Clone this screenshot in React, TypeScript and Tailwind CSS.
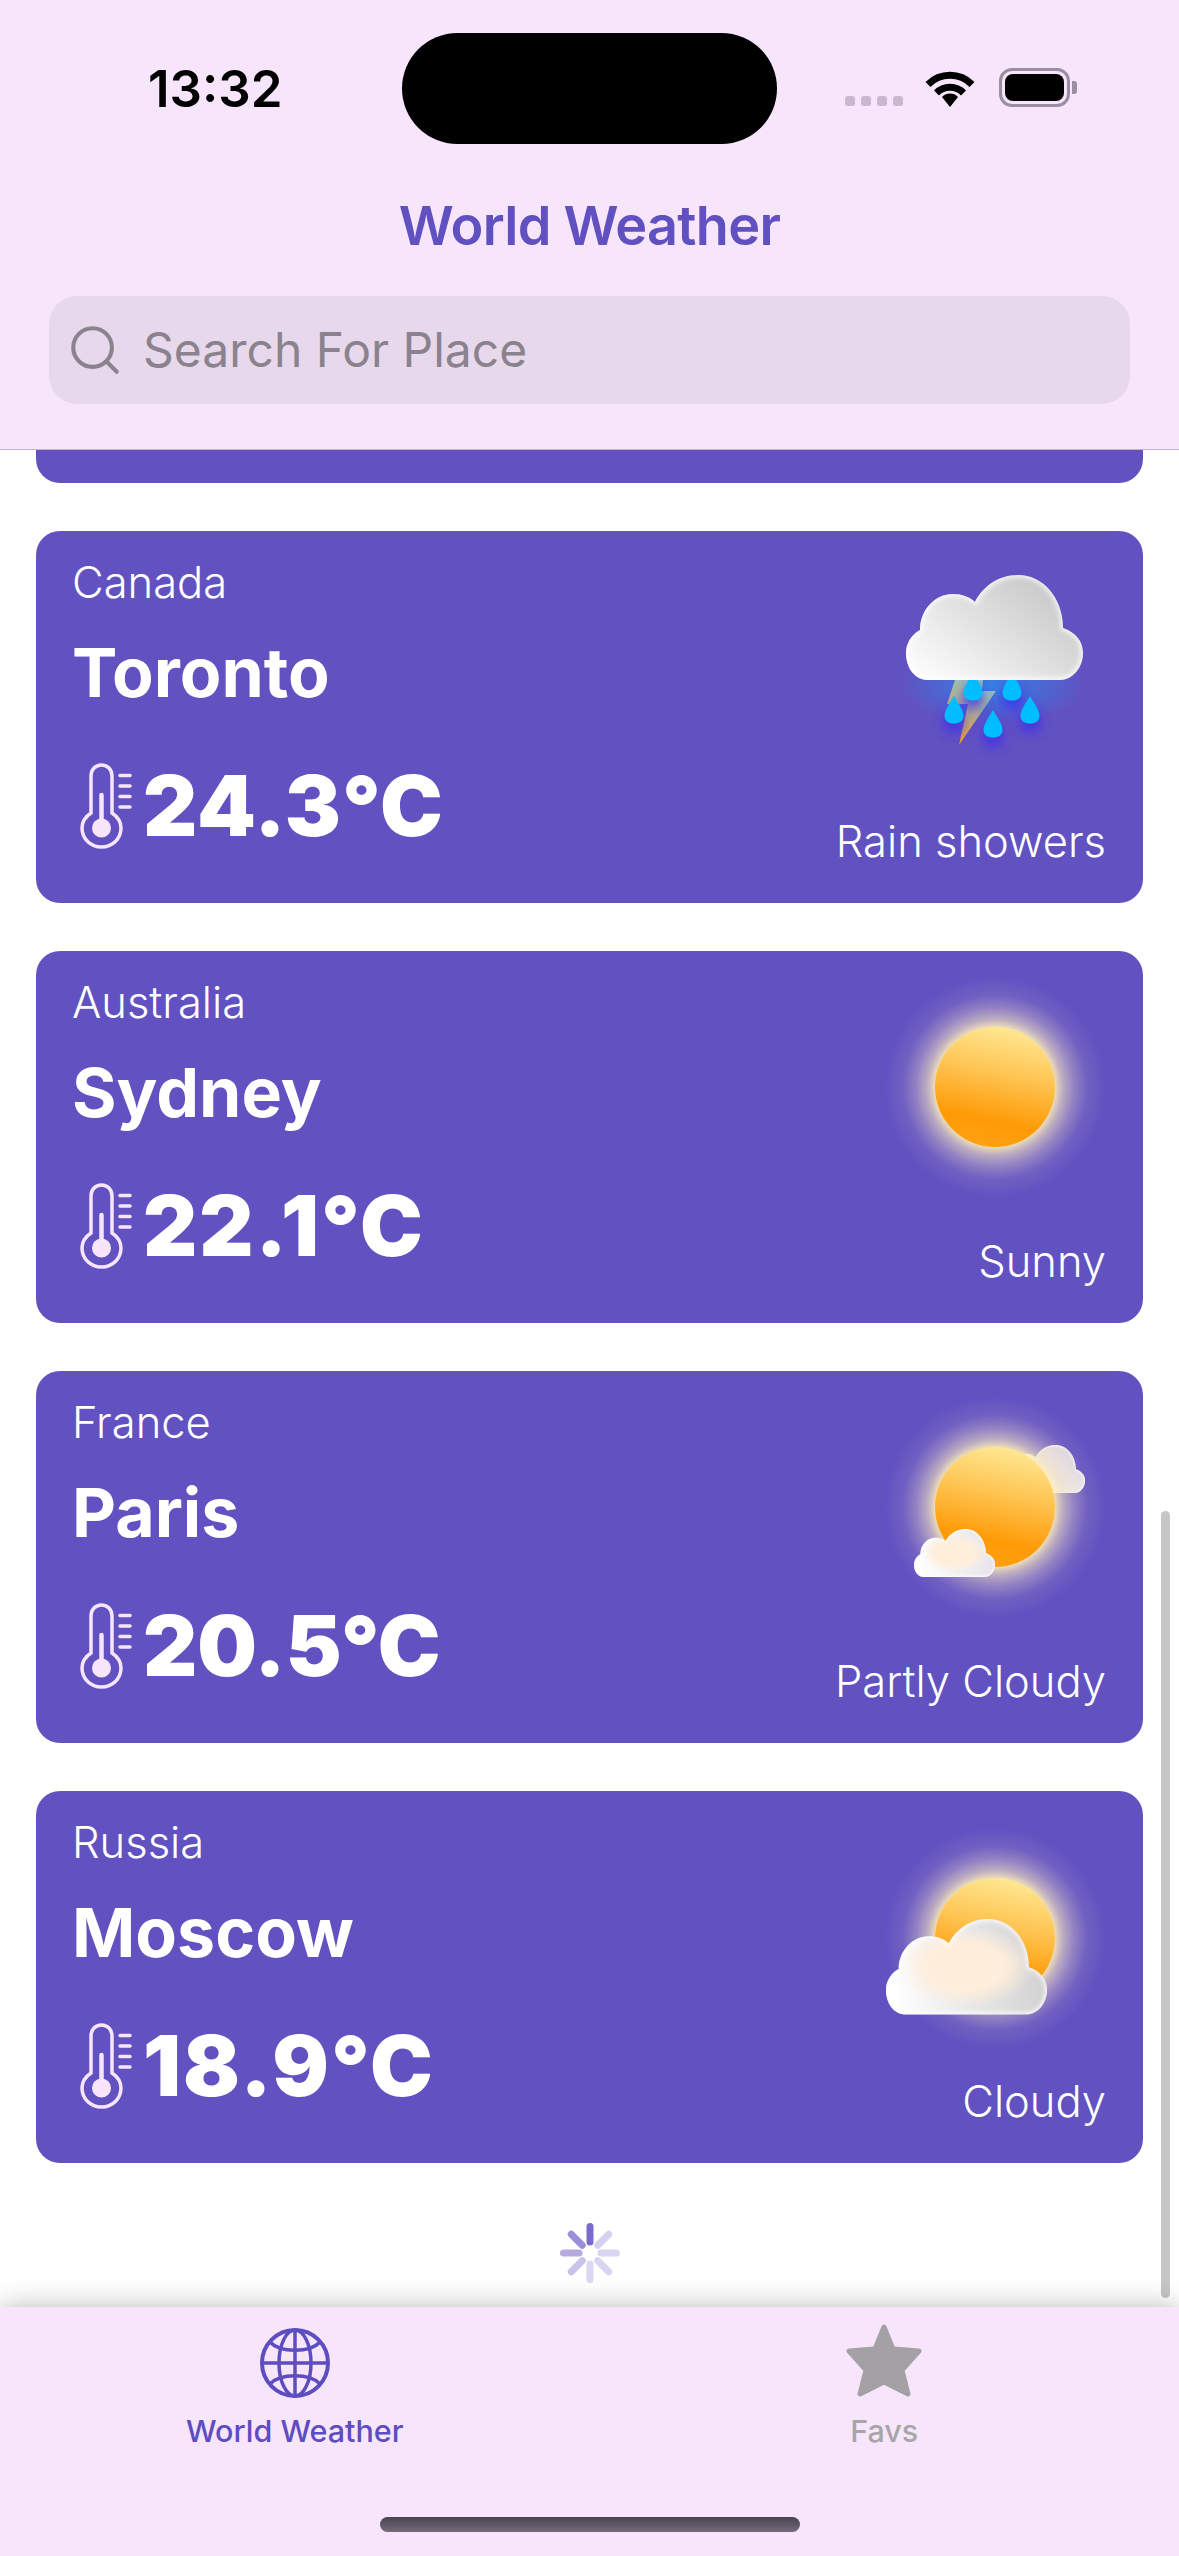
import { useId } from "react";
import { Search } from "lucide-react";

const CLOUD =
  "M53 132C40 132 31 120 31 105C31 95 37 86 45 82C45 62 60 46 78 46C87 46 95 49 100 54C108 38 124 27 143 27C168 27 188 50 188 80C200 84 208 93 208 105C208 120 197 132 185 132Z";

function Cloud({ x, y, scale, tint, to = "#d6d6d8", flat }: { x: number; y: number; scale: number; tint?: string; to?: string; flat?: boolean }) {
  const id = useId();
  return (
    <g transform={`translate(${x} ${y}) scale(${scale}) translate(-31 -27)`}>
      <defs>
        <linearGradient id={`${id}f`} x1="0.05" y1="1" x2="1" y2={flat ? "0.95" : "0.25"}>
          <stop offset="0" stopColor="#ffffff" />
          <stop offset="1" stopColor={to} />
        </linearGradient>
        <radialGradient id={`${id}t`} cx="0.5" cy="0.5" r="0.42">
          <stop offset="0" stopColor={tint} />
          <stop offset="0.55" stopColor={tint} />
          <stop offset="1" stopColor={tint} stopOpacity="0" />
        </radialGradient>
        <clipPath id={`${id}c`}>
          <path d={CLOUD} />
        </clipPath>
        <filter id={`${id}b`} x="-10%" y="-10%" width="120%" height="120%">
          <feGaussianBlur stdDeviation="2.500" />
        </filter>
      </defs>
      <path d={CLOUD} fill={`url(#${id}f)`} />
      {tint && <path d={CLOUD} fill={`url(#${id}t)`} />}
      <g clipPath={`url(#${id}c)`}>
        <path d={CLOUD} fill="none" stroke="#ffffff" strokeWidth="4" filter={`url(#${id}b)`} />
      </g>
    </g>
  );
}

function Sun({ cy = 119 }: { cy?: number }) {
  const id = useId();
  return (
    <>
      <defs>
        <radialGradient id={`${id}g`}>
          <stop offset="0.54" stopColor="#fff0b8" stopOpacity="0.9" />
          <stop offset="0.62" stopColor="#f3e2c0" stopOpacity="0.62" />
          <stop offset="0.72" stopColor="#f0dfc8" stopOpacity="0.34" />
          <stop offset="0.84" stopColor="#f0dfc8" stopOpacity="0.1" />
          <stop offset="1" stopColor="#f0dfc8" stopOpacity="0" />
        </radialGradient>
        <linearGradient id={`${id}s`} x1="0.62" y1="0" x2="0.42" y2="1">
          <stop offset="0" stopColor="#ffe894" />
          <stop offset="0.38" stopColor="#ffc553" />
          <stop offset="0.78" stopColor="#ff9a06" />
          <stop offset="1" stopColor="#ffa111" />
        </linearGradient>
      </defs>
      <circle cx="120" cy={cy} r="110" fill={`url(#${id}g)`} />
      <circle cx="120" cy={cy} r="60" fill={`url(#${id}s)`} />
    </>
  );
}

const DROP = "M0 -14C3 -8 9.500 -1 9.500 6C9.500 11 5.500 13.500 0 13.500C-5.500 13.500 -9.500 11 -9.500 6C-9.500 -1 -3 -8 0 -14Z";

function RainIcon() {
  const id = useId();
  const drops = [
    [98, 139],
    [137, 139],
    [79, 162],
    [155, 162],
    [118, 176],
  ];
  return (
    <svg viewBox="0 0 240 240" className="w-[240px] h-[240px]">
      <defs>
        <radialGradient id={`${id}g`} cx="0.5" cy="0.5" r="0.5">
          <stop offset="0" stopColor="#2f8ce8" stopOpacity="0.85" />
          <stop offset="0.55" stopColor="#3a78e0" stopOpacity="0.55" />
          <stop offset="1" stopColor="#3a78e0" stopOpacity="0" />
        </radialGradient>
        <linearGradient id={`${id}l`} x1="0.7" y1="0" x2="0.3" y2="1">
          <stop offset="0" stopColor="#8fc8c0" />
          <stop offset="0.5" stopColor="#b9b488" />
          <stop offset="1" stopColor="#f5a125" />
        </linearGradient>
        <filter id={`${id}b`} x="-100%" y="-100%" width="300%" height="300%">
          <feGaussianBlur stdDeviation="7" />
        </filter>
      </defs>
      <ellipse cx="118" cy="138" rx="92" ry="38" fill={`url(#${id}g)`} />
      <polygon points="80,132 108,132 107,143 121,143 84,197 93,156 72,156" fill={`url(#${id}l)`} />
      {drops.map(([x, y], i) => (
        <path key={i} d={DROP} transform={`translate(${x} ${y + 8})`} fill="#3a2cf0" filter={`url(#${id}b)`} />
      ))}
      {drops.map(([x, y], i) => (
        <path key={i} d={DROP} transform={`translate(${x} ${y})`} fill="#00bdff" />
      ))}
      <Cloud x={31} y={27} scale={1} to="#c6c6c6" />
    </svg>
  );
}

function SunIcon() {
  return (
    <svg viewBox="0 0 240 240" className="w-[240px] h-[240px]">
      <Sun />
    </svg>
  );
}

function PartlyIcon() {
  return (
    <svg viewBox="0 0 240 240" className="w-[240px] h-[240px]">
      <Cloud x={129} y={57} scale={0.458} to="#d8d4e0" />
      <Sun />
      <Cloud x={39} y={141} scale={0.458} to="#e6e4ea" tint="#ffeeda" flat />
    </svg>
  );
}

function CloudyIcon() {
  return (
    <svg viewBox="0 0 240 240" className="w-[240px] h-[240px]">
      <Sun cy={130} />
      <Cloud x={11} y={111} scale={0.91} to="#d2d2d2" tint="#ffeedb" flat />
    </svg>
  );
}

function Thermometer() {
  return (
    <svg viewBox="0 0 54 86" className="w-[54px] h-[86px] shrink-0" fill="none" stroke="#f7e5fc">
      <path d="M11 50V13C11 6.500 15.500 2 21.500 2C27.500 2 32 6.500 32 13V50C38 54 41 59.500 41 65C41 75.500 32.500 84 21.500 84C10.500 84 2 75.500 2 65C2 59.500 5 54 11 50Z" strokeWidth="3.500" />
      <path d="M21.500 32V60" strokeWidth="4.500" strokeLinecap="round" />
      <circle cx="21.500" cy="65" r="9.500" fill="#f7e5fc" stroke="none" />
      <path d="M40 12.500H50M40 23H50M40 33.500H50M40 44H50" strokeWidth="3.500" strokeLinecap="round" />
    </svg>
  );
}

const PLACES = [
  { country: "Canada", city: "Toronto", temp: "24.3°C", spacing: "tracking-[1px]", desc: "Rain showers", Icon: RainIcon },
  { country: "Australia", city: "Sydney", temp: "22.1°C", spacing: "tracking-[2px]", desc: "Sunny", Icon: SunIcon },
  { country: "France", city: "Paris", temp: "20.5°C", spacing: "tracking-[0px]", desc: "Partly Cloudy", Icon: PartlyIcon },
  { country: "Russia", city: "Moscow", temp: "18.9°C", spacing: "tracking-[2px]", desc: "Cloudy", Icon: CloudyIcon },
];

function WeatherCard({ country, city, temp, spacing, desc, Icon }: (typeof PLACES)[number]) {
  return (
    <div className="h-[372px] shrink-0 rounded-[24px] bg-[#6252c1] text-white flex justify-between pl-[36px] pr-[37px]">
      <div className="flex flex-col">
        <div className="mt-[29px] text-[43.500px] leading-[44px] font-light">{country}</div>
        <div className="mt-[33px] text-[68px] leading-[70px] font-bold">{city}</div>
        <div className="mt-[56px] ml-[8px] flex items-center gap-[9px]">
          <Thermometer />
          <span className={`text-[84px] leading-[86px] font-black ${spacing}`}>{temp}</span>
        </div>
      </div>
      <div className="flex flex-col items-end">
        <div className="mt-[17px] -mr-[9px]">
          <Icon />
        </div>
        <div className="mt-auto mb-[40px] text-[43.500px] leading-[44px] font-light">{desc}</div>
      </div>
    </div>
  );
}

function Spinner() {
  const spokes = ["#7a6ccc", "#d6d1f1", "#d8d4f2", "#d8d4f2", "#dcd8f3", "#c9c2ec", "#b5aadf", "#9a8fd8"];
  return (
    <svg viewBox="-30 -30 60 60" className="w-[60px] h-[60px]">
      {spokes.map((c, i) => (
        <line key={i} x1="0" y1="-26.500" x2="0" y2="-11" stroke={c} strokeWidth="7" strokeLinecap="round" transform={`rotate(${i * 45})`} />
      ))}
    </svg>
  );
}

export default function App() {
  return (
    <div className="relative w-[1179px] h-[2556px] overflow-hidden flex flex-col bg-white font-['Inter',sans-serif]">
      <header className="relative z-10 h-[450px] shrink-0 bg-[#f7e5fc] border-b border-[#c2b4c8] flex flex-col">
        <div className="mt-[33px] h-[111px] grid grid-cols-[402px_375px_1fr]">
          <div className="pl-[148px] pt-[31px] text-[51px] leading-[50px] font-semibold text-black">13:32</div>
          <div className="rounded-[56px] bg-black" />
          <div className="flex items-start pl-[68px]">
            <div className="mt-[63px] flex gap-[6px] h-[10px]">
              {[0, 1, 2, 3].map(i => (
                <span key={i} className="w-[10px] h-[10px] rounded-[3px] bg-[#c9b6cf]" />
              ))}
            </div>
            <svg viewBox="0 0 50 38" className="ml-[22px] mt-[36px] w-[50px] h-[38px]" fill="none" stroke="black" strokeWidth="7">
              <path d="M3 15.500A31 31 0 0 1 47 15.500" />
              <path d="M11.500 24A19 19 0 0 1 38.500 24" />
              <path d="M25 38L17 28A11 11 0 0 1 33 28Z" fill="black" stroke="none" />
            </svg>
            <div className="ml-[24px] mt-[35px] flex items-center">
              <div className="w-[71px] h-[39px] rounded-[13px] border-[3px] border-[#9a8ea0] p-[3px]">
                <div className="w-full h-full rounded-[8px] bg-black" />
              </div>
              <div className="ml-[2px] w-[5px] h-[13px] rounded-r-[3px] bg-[#9a8ea0]" />
            </div>
          </div>
        </div>
        <h1 className="mt-[52px] text-center text-[54px] leading-[60px] font-semibold tracking-[-0.7px] text-[#6050c0]">World Weather</h1>
        <div className="mt-[40px] mx-[49px] h-[108px] rounded-[28px] bg-[#e8d8ec] flex items-center pl-[17px] gap-[19px] text-[#8a838e]">
          <Search className="w-[58px] h-[58px]" strokeWidth={1.7} />
          <span className="text-[48px] leading-[60px]">Search For Place</span>
        </div>
      </header>

      <main className="relative flex-1 min-h-0 overflow-hidden">
        <div className="-mt-[339px] px-[36px] flex flex-col gap-[48px]">
          <div className="h-[372px] shrink-0 rounded-[24px] bg-[#6252c1]" />
          {PLACES.map(p => (
            <WeatherCard key={p.city} {...p} />
          ))}
        </div>
        <div className="mt-[60px] flex justify-center">
          <Spinner />
        </div>
        <div className="absolute left-[1161px] top-[1061px] w-[9px] h-[787px] rounded-full bg-[#c6c6c6]" />
      </main>

      <nav className="relative z-10 h-[249px] shrink-0 bg-[#f7e5fc] shadow-[0_0_26px_rgba(0,0,0,0.28)] flex flex-col">
        <div className="grid grid-cols-2">
          <div className="flex flex-col items-center pt-[21px]">
            <svg viewBox="0 0 70 70" className="w-[70px] h-[70px]" fill="none" stroke="#5c4dc0" strokeWidth="3.500">
              <circle cx="35" cy="35" r="33" strokeWidth="4" />
              <ellipse cx="35" cy="35" rx="16" ry="33" />
              <path d="M35 2V68M2 35H68" />
              <path d="M10 14C20 25 50 25 60 14M10 56C20 45 50 45 60 56" />
            </svg>
            <span className="mt-[15px] text-[30.500px] leading-[36px] font-medium text-[#5c4dc0]">World Weather</span>
          </div>
          <div className="flex flex-col items-center pt-[17px]">
            <svg viewBox="0 0 76 74" className="w-[76px] h-[74px]" fill="#a3a1a3" stroke="#a3a1a3" strokeWidth="5" strokeLinejoin="round">
              <path d="M38 3L47 25L73 27L56 46L62 70L38 58L14 70L20 46L3 27L29 25Z" />
            </svg>
            <span className="mt-[15px] text-[30.500px] leading-[36px] font-medium text-[#a8a5a9]">Favs</span>
          </div>
        </div>
        <div className="mt-auto mb-[24px] mx-auto w-[420px] h-[15px] rounded-full bg-gradient-to-b from-[#4a4350] to-[#756b7a]" />
      </nav>
    </div>
  );
}
